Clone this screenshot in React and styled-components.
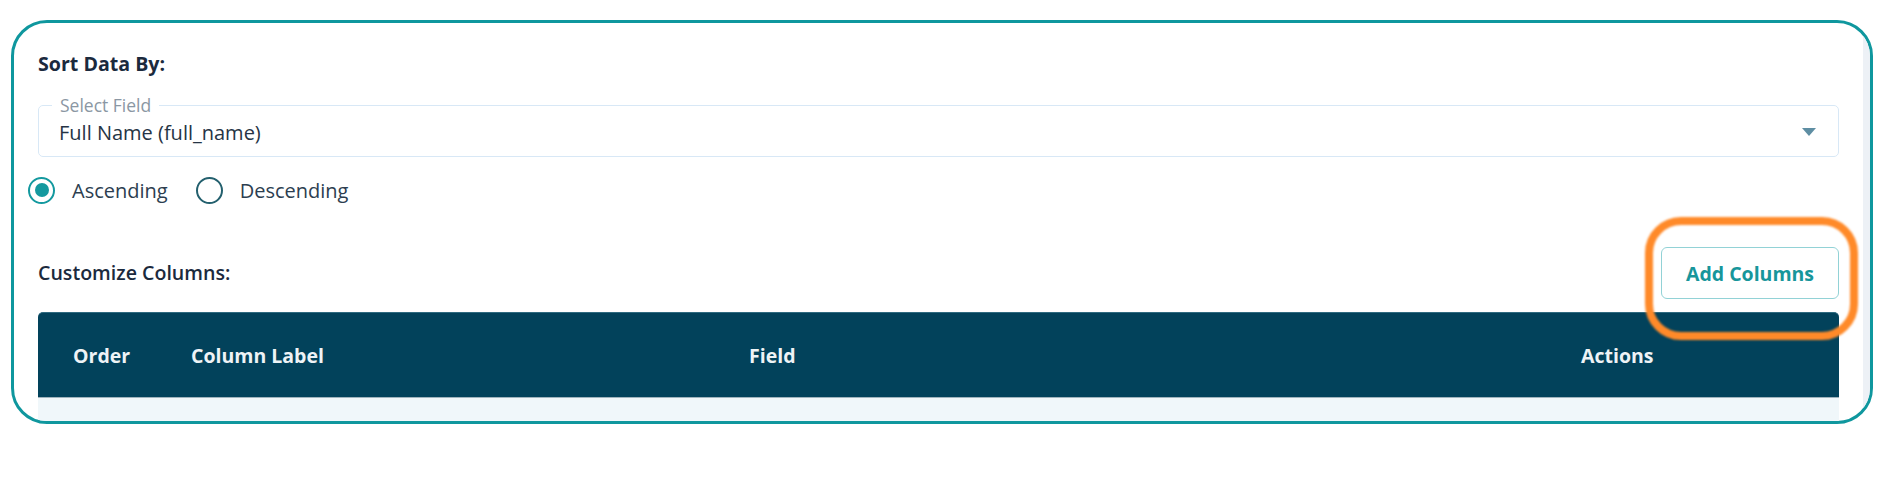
import React, { useState } from 'react';
import styled, { createGlobalStyle } from 'styled-components';

const GlobalStyle = createGlobalStyle`
    html, body {
        margin: 0;
        padding: 0;
        background: #ffffff;
        font-family: 'Open Sans', 'Noto Sans', Arial, sans-serif;
    }
`;

const Page = styled.div`
    padding: 20px 15px 0 11px;
`;

const Card = styled.div`
    height: 404px;
    box-sizing: border-box;
    border: 3px solid #0f979e;
    border-radius: 36px;
    overflow: hidden;
    display: flex;
    background: #ffffff;
`;

const Content = styled.div`
    flex: 1;
    min-width: 0;
    padding: 28px 24px 0 24px;
    display: flex;
    flex-direction: column;
    & > * {
        flex-shrink: 0;
    }
`;

/* scrollbar track at the right side of the card */
const ScrollTrack = styled.div`
    width: 7px;
    flex-shrink: 0;
    background: #edf1f6;
`;

const SectionTitle = styled.div`
    font-size: 19.6px;
    line-height: 26px;
    font-weight: ${(p) => (p.$bold ? 700 : 600)};
    color: #1b2a3d;
`;

const SelectBox = styled.div`
    position: relative;
    margin-top: 28px;
    height: 52px;
    box-sizing: border-box;
    border: 1.5px solid #d8e8f6;
    border-radius: 5px;
    display: flex;
    align-items: center;
    padding: 0 22px 0 20px;
    cursor: pointer;
`;

const FloatLabel = styled.span`
    position: absolute;
    top: -12px;
    left: 13px;
    padding: 0 8px;
    background: #ffffff;
    font-size: 17.5px;
    line-height: 22px;
    color: #8b97a3;
`;

const SelectValue = styled.span`
    flex: 1;
    font-size: 20px;
    color: #263445;
    padding-top: 2px;
`;

const Caret = styled.span`
    width: 0;
    height: 0;
    border-left: 7.5px solid transparent;
    border-right: 7.5px solid transparent;
    border-top: 8px solid #5e8ea3;
    margin-top: 2px;
`;

const RadioRow = styled.div`
    margin-top: 16px;
    margin-left: -10px;
    display: flex;
    align-items: center;
    height: 34px;
`;

const Option = styled.label`
    display: flex;
    align-items: center;
    gap: 17px;
    margin-right: 28px;
    font-size: 20px;
    color: #2c3e50;
    cursor: pointer;
`;

const RadioCircle = styled.span`
    width: 27px;
    height: 27px;
    box-sizing: border-box;
    border-radius: 50%;
    border: 2.5px solid ${(p) => (p.$checked ? '#14999f' : '#24606e')};
    display: flex;
    align-items: center;
    justify-content: center;
    &::after {
        content: '';
        width: 14px;
        height: 14px;
        border-radius: 50%;
        background: #14999f;
        display: ${(p) => (p.$checked ? 'block' : 'none')};
    }
`;

const ColumnsRow = styled.div`
    margin-top: 40px;
    display: flex;
    align-items: center;
    justify-content: space-between;
`;

const ButtonWrap = styled.div`
    position: relative;
`;

const OutlineButton = styled.button`
    width: 178px;
    height: 52px;
    box-sizing: border-box;
    border: 1.5px solid #92d2d6;
    border-radius: 6px;
    background: #ffffff;
    color: #17969b;
    font-family: 'Open Sans', 'Noto Sans', Arial, sans-serif;
    font-size: 19.5px;
    font-weight: 700;
    cursor: pointer;
    padding: 0;
    display: block;
`;

/* orange annotation ring drawn over the button */
const Highlight = styled.span`
    position: absolute;
    top: -30px;
    left: -16px;
    right: -19px;
    bottom: -41px;
    border: 8px solid #ff8a29;
    border-radius: 36px;
    filter: blur(0.8px);
    pointer-events: none;
`;

const Table = styled.div`
    margin-top: 13px;
`;

const HeaderRow = styled.div`
    display: grid;
    grid-template-columns: 118px 558px 1fr 293px;
    height: 86px;
    align-items: center;
    background: #02425b;
    border-top: 1px solid #2f6a80;
    border-bottom: 1px solid #9fb3bd;
    border-radius: 5px 5px 0 0;
    box-sizing: border-box;
`;

const HeadCell = styled.div`
    padding-left: 35px;
    font-size: 19.5px;
    font-weight: 700;
    color: #eef3f6;
`;

const BodyRow = styled.div`
    height: 60px;
    background: #f0f7fa;
`;

const App = () => {
    const [order, setOrder] = useState('asc');

    return (
        <>
            <GlobalStyle />
            <Page>
                <Card>
                    <Content>
                        <SectionTitle $bold>Sort Data By:</SectionTitle>
                        <SelectBox>
                            <FloatLabel>Select Field</FloatLabel>
                            <SelectValue>Full Name (full_name)</SelectValue>
                            <Caret />
                        </SelectBox>
                        <RadioRow>
                            <Option onClick={() => setOrder('asc')}>
                                <RadioCircle $checked={order === 'asc'} />
                                Ascending
                            </Option>
                            <Option onClick={() => setOrder('desc')}>
                                <RadioCircle $checked={order === 'desc'} />
                                Descending
                            </Option>
                        </RadioRow>
                        <ColumnsRow>
                            <SectionTitle>Customize Columns:</SectionTitle>
                            <ButtonWrap>
                                <OutlineButton>Add Columns</OutlineButton>
                                <Highlight />
                            </ButtonWrap>
                        </ColumnsRow>
                        <Table>
                            <HeaderRow>
                                <HeadCell>Order</HeadCell>
                                <HeadCell>Column Label</HeadCell>
                                <HeadCell>Field</HeadCell>
                                <HeadCell>Actions</HeadCell>
                            </HeaderRow>
                            <BodyRow />
                        </Table>
                    </Content>
                    <ScrollTrack />
                </Card>
            </Page>
        </>
    );
};

export default App;
